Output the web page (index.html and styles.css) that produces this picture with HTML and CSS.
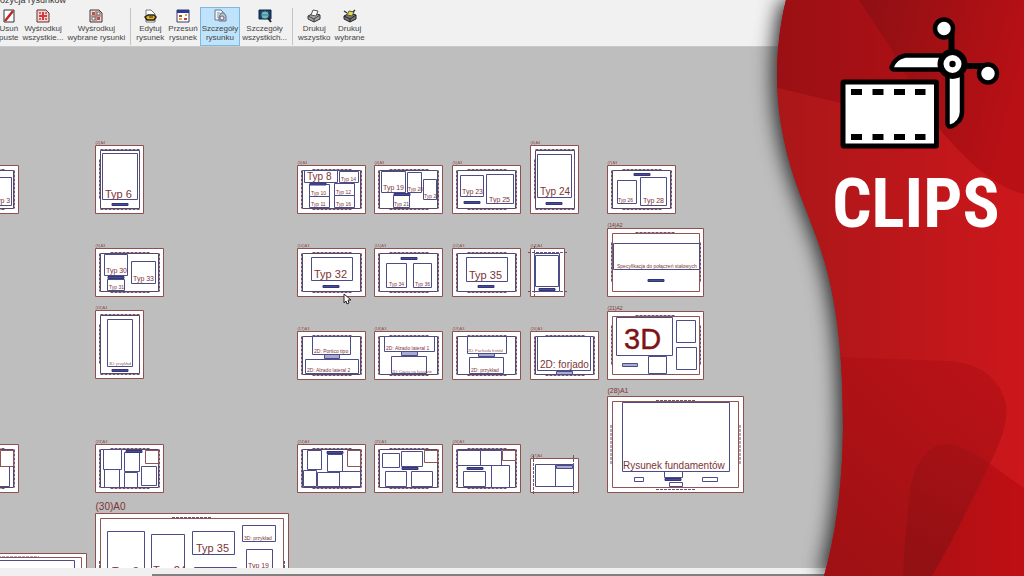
FILE: index.html
```html
<!DOCTYPE html>
<html lang="pl">
<head>
<meta charset="utf-8">
<title>Kompozycja rysunków</title>
<link rel="stylesheet" href="styles.css">
</head>
<body>
<main class="app">
  <header class="titlebar"><span class="title">Kompozycja rysunków</span></header>
  <nav class="toolbar" aria-label="Rysunki">
    <button class="tool tool-first" type="button">
      <svg class="icon" viewBox="0 0 14 14"><path d="M2 1h10v12H2z" fill="#fff" stroke="#333"/><path d="M3 12 11 2" stroke="#c3221f" stroke-width="2.4"/></svg>
      <span>Usuń<br>puste</span></button>
    <button class="tool" type="button">
      <svg class="icon" viewBox="0 0 14 14"><path d="M1 1h9l3 3v9H1z" fill="#f8d4d4" stroke="#5c3030"/><path d="M7 3v8M3 7h8" stroke="#d43a3a" stroke-width="2"/><path d="M3 3h2v2H3zM9 3h2v2H9zM3 9h2v2H3zM9 9h2v2H9z" fill="#c66"/></svg>
      <span>Wyśrodkuj<br>wszystkie...</span></button>
    <button class="tool" type="button">
      <svg class="icon" viewBox="0 0 14 14"><path d="M1 1h9l3 3v9H1z" fill="#ecdada" stroke="#4a3333"/><path d="M3 3h3v3H3zM8 8h3v3H8z" fill="#b85050"/><path d="M8 3h3v3H8zM3 8h3v3H3z" fill="#fff" stroke="#766"/><path d="M7 2v10M2 7h10" stroke="#866"/></svg>
      <span>Wyśrodkuj<br>wybrane rysunki</span></button>
    <span class="separator"></span>
    <button class="tool" type="button">
      <svg class="icon" viewBox="0 0 14 14"><path d="M3 1h5l4 4v8H3z" fill="#fff" stroke="#777"/><path d="M2 8 5 6h6l2 2-2 3H4z" fill="#efb51d" stroke="#222" stroke-width="1.5"/><path d="M6 8h4" stroke="#222"/></svg>
      <span>Edytuj<br>rysunek</span></button>
    <button class="tool" type="button">
      <svg class="icon" viewBox="0 0 14 14"><path d="M1 1h12v12H1z" fill="#fff" stroke="#383868"/><path d="M1 1h12v3H1z" fill="#263b91"/><path d="M3 6h3v2H3zM8 9h3v2H8z" fill="#c93d35"/><path d="M9 6h2M3 10h3" stroke="#e4a52c" stroke-width="2"/></svg>
      <span>Przesuń<br>rysunek</span></button>
    <button class="tool tool-active" type="button" aria-pressed="true">
      <svg class="icon" viewBox="0 0 14 14"><path d="M2 1h6l2 2v8H2z" fill="#f2f5fa" stroke="#687789"/><path d="M4 4h3M4 6h2M4 8h2" stroke="#8491a4"/><path d="M8 4h3l2 3v5H6V8z" fill="#b8c2d0" stroke="#657386"/><circle cx="9" cy="9" r="2" fill="#eef" stroke="#667"/></svg>
      <span>Szczegóły<br>rysunku</span></button>
    <button class="tool" type="button">
      <svg class="icon" viewBox="0 0 14 14"><path d="M1 1h12v9H1z" fill="#183c73" stroke="#172440"/><circle cx="7" cy="6" r="4" fill="#a9dce0" stroke="#14616b"/><path d="M3 6h8M7 2v8M5 3v6M9 3v6" stroke="#216d83" stroke-width=".7"/><path d="m10 9 3 4" stroke="#222" stroke-width="2"/></svg>
      <span>Szczegóły<br>wszystkich...</span></button>
    <span class="separator"></span>
    <button class="tool" type="button">
      <svg class="icon" viewBox="0 0 14 14"><path d="m1 7 6-3 6 2v4l-6 3-6-3z" fill="#a5a5a5" stroke="#333"/><path d="m4 6 2-5 5 1-2 5z" fill="#fff" stroke="#555"/><path d="m1 7 6 3 6-4M7 10v3" fill="none" stroke="#444"/></svg>
      <span>Drukuj<br>wszystko</span></button>
    <button class="tool" type="button">
      <svg class="icon" viewBox="0 0 14 14"><path d="m1 7 6-3 6 2v4l-6 3-6-3z" fill="#777" stroke="#222"/><path d="m4 6 2-4 5 1-2 4z" fill="#e8dc35" stroke="#555"/><path d="m1 7 6 3 6-4M7 10v3" fill="none" stroke="#222"/><path d="m1 2 3 2M12 1l-2 2" stroke="#333" stroke-width="1.5"/></svg>
      <span>Drukuj<br>wybrane</span></button>
  </nav>

  <section class="workspace" aria-label="Arkusze">
    <svg class="sheets">
      <defs>
        <g id="a3">
          <path class="sheet" d="M0 0h68v48H0z"/><path class="frame" d="M5 5h58v38H5z"/>
          <path class="marks" d="M15 4h39M15 44h39M4 5v38M64 5v38"/>
        </g>
        <g id="a4">
          <path class="sheet" d="M0 0h48v68H0z"/><path class="frame" d="M5 5h39v58H5z"/>
          <path class="marks" d="M5 4h39M5 64h39M4 14v40M44 14v40"/>
        </g>
        <g id="a2">
          <path class="sheet" d="M0 0h96v68H0z"/><path class="frame frame-red" d="M5 5h87v58H5z"/>
          <path class="marks" d="M28 4h40M28 63h40M4 14v40M93 14v40"/>
        </g>
        <path id="stamp" class="stamp" d="M0 0h16v2H0z"/>
      </defs>
      <g transform="translate(0 -47)">
        <use href="#a3" x="-49.5" y="165.5"/><use href="#a4" x="95.5" y="145.5"/>
        <use href="#a3" x="297.5" y="165.5"/><use href="#a3" x="374.5" y="165.5"/><use href="#a3" x="452.5" y="165.5"/>
        <use href="#a4" x="530.5" y="145.5"/><use href="#a3" x="607.5" y="165.5"/>
        <use href="#a3" x="95.5" y="248.5"/><use href="#a3" x="297.5" y="248.5"/><use href="#a3" x="374.5" y="248.5"/><use href="#a3" x="452.5" y="248.5"/>
        <use href="#a2" x="607.5" y="228.5"/><use href="#a4" x="95.5" y="310.5"/>
        <use href="#a3" x="297.5" y="331.5"/><use href="#a3" x="374.5" y="331.5"/><use href="#a3" x="452.5" y="331.5"/><use href="#a3" x="530.5" y="331.5"/>
        <use href="#a2" x="607.5" y="311.5"/>
        <use href="#a3" x="-49.5" y="444.5"/><use href="#a3" x="95.5" y="444.5"/><use href="#a3" x="297.5" y="444.5"/><use href="#a3" x="374.5" y="444.5"/><use href="#a3" x="452.5" y="444.5"/>

        <path class="sheet" d="M530.5 248.5h34v48h-34zM530.5 458.5h48v34h-48zM607.5 396.5h136v96h-136zM95.5 513.5h193v70h-193zM-20.5 553.5h107v40h-107z"/>
        <path class="frame frame-red" d="M612.5 401.5h126v86h-126zM100.5 518.5h183v70h-183zM-20.5 557.5h102v40h-102z"/>
        <path class="marks" d="M656 400.5h40M656 489.5h40M611 425v39M740 425v39M172 517.5h40M99.500 561v20M284.500 561v20M-10 557h49M528 252.500h39M528 291.500h39M534.500 246v50M533.500 455v40M573.500 455v40"/>

        <path class="view" d="M-20.500 177.500h32v28h-32zM102.500 153.500h35v46h-35z
          M304.500 170.500h33v12h-33zM339.500 171.500h19v11h-19zM309.500 184.500h20v12h-20zM309.500 196.500h20v11h-20zM334.500 183.500h20v12h-20zM334.500 195.500h20v12h-20z
          M381.500 171.500h24v21h-24zM407.500 172.500h14v20h-14zM423.500 179.500h13v20h-13zM393.500 195.500h16v12h-16z
          M460.500 175.500h23v21h-23zM486.500 174.500h27v29h-27zM537.500 154.500h34v43h-34z
          M617.500 180.500h19v23h-19zM640.500 177.500h26v28h-26z
          M104.500 254.500h23v21h-23zM107.500 279.500h17v11h-17zM131.500 261.500h24v22h-24z
          M311.500 257.500h41v23h-41zM386.500 263.500h20v24h-20zM413.500 263.500h18v24h-18zM466.500 257.500h41v24h-41z
          M534.500 253.500h25v38h-25zM535.500 255.500h23v31h-23zM613.500 243.500h86v26h-86z
          M107.500 319.500h25v47h-25z
          M312.500 336.500h38v18h-38zM305.500 359.500h53v14h-53zM384.500 336.500h50v15h-50zM391.500 356.500h35v17h-35z
          M467.500 336.500h39v17h-39zM469.500 357.500h34v16h-34zM537.500 336.500h53v34h-53z
          M616.500 317.500h56v38h-56zM648.500 356.500h18v17h-18zM676.500 320.500h19v22h-19zM676.500 347.500h20v22h-20z
          M622.500 402.500h107v69h-107zM664.500 471.500h18v6h-18zM634.500 477.500h9v4h-9zM702.500 477.500h15v4h-15zM669.500 482.500h13v4h-13z"/>
        <path class="view" d="M-8.500 466.500h18v20h-18z
          M103.500 449.500h18v20h-18zM104.500 469.500h15v18h-15zM124.500 452.500h15v19h-15zM124.500 472.500h13v15h-13zM141.500 466.500h15v19h-15z
          M307.500 450.500h14v19h-14zM327.500 454.500h15v17h-15zM303.500 470.500h13v16h-13zM317.500 472.500h22v14h-22zM339.500 471.500h21v15h-21z
          M382.500 453.500h17v14h-17zM401.500 451.500h21v15h-21zM385.500 471.500h21v15h-21zM411.500 471.500h21v15h-21z
          M457.500 450.500h23v15h-23zM480.500 450.500h21v15h-21zM463.500 471.500h22v15h-22zM491.500 465.500h18v22h-18z
          M535.500 464.500h20v22h-20zM555.500 464.500h18v22h-18z
          M107.500 531.500h37v50h-37zM151.500 534.500h33v50h-33zM192.500 531.500h42v23h-42zM242.500 525.500h33v16h-33zM246.500 549.500h26v40h-26zM194.500 567.500h42v12h-42zM-20.500 560.500h95v30h-95z"/>
        <path class="frame frame-red" d="M0.500 450.500h13v16h-13zM145.500 450.500h13v13h-13zM347.500 450.500h13v16h-13zM424.500 450.500h13v12h-13zM502.500 450.500h13v10h-13z"/>

        <use href="#stamp" x="112" y="203.500"/><use href="#stamp" x="464" y="201.500"/><use href="#stamp" x="546" y="202.500"/><use href="#stamp" x="634" y="173.500"/>
        <use href="#stamp" x="108" y="276.500"/><use href="#stamp" x="323" y="285.500"/><use href="#stamp" x="401" y="257.500"/><use href="#stamp" x="478" y="285.500"/><use href="#stamp" x="539" y="288.500"/><use href="#stamp" x="648" y="279.500"/>
        <use href="#stamp" x="112" y="369.500"/><use href="#stamp" x="126" y="450.500"/><use href="#stamp" x="394" y="193.500"/><use href="#stamp" x="310" y="183"/><use href="#stamp" x="327" y="451.500"/><use href="#stamp" x="402" y="467.500"/><use href="#stamp" x="467" y="467.500"/><use href="#stamp" x="665" y="478.500"/>
        <path class="view stamp-open" d="M324.500 354.500h15v4h-15zM401.500 351.500h16v4h-16zM478.500 353.500h16v3h-16zM556.500 371.500h16v3h-16zM622.500 363.500h15v3h-15zM556.500 465.500h16v3h-16z"/>

        <g class="caption caption-xs">
          <text x="95.500" y="144">(2)A4</text><text x="297.500" y="164">(3)A3</text><text x="374.500" y="164">(4)A3</text><text x="452.500" y="164">(5)A3</text><text x="530.500" y="144">(6)A4</text><text x="607.500" y="164">(7)A3</text>
          <text x="95.500" y="247">(9)A3</text><text x="297.500" y="247">(10)A3</text><text x="374.500" y="247">(11)A3</text><text x="452.500" y="247">(12)A3</text><text x="530.500" y="247">(13)A4</text>
          <text x="95.500" y="309">(16)A4</text><text x="297.500" y="330">(17)A3</text><text x="374.500" y="330">(18)A3</text><text x="452.500" y="330">(19)A3</text><text x="530.500" y="330">(20)A3</text>
          <text x="95.500" y="443">(23)A3</text><text x="297.500" y="443">(24)A3</text><text x="374.500" y="443">(25)A3</text><text x="452.500" y="443">(26)A3</text><text x="530.500" y="457">(27)A4</text>
          <text x="109" y="365">3D: przykład</text><text x="392" y="373">2D: Cięcia na fasadzie</text><text x="468" y="352">2D: Fachada frontal</text>
        </g>
        <g class="caption caption-s">
          <text x="607.500" y="227">(14)A2</text><text x="607.500" y="310">(21)A2</text>
          <text x="341" y="181">Typ 14</text><text x="311" y="195">Typ 10</text><text x="336" y="194">Typ 12</text><text x="311" y="206">Typ 11</text><text x="336" y="206">Typ 16</text>
          <text x="408" y="191">Typ 20</text><text x="424" y="198">Typ 22</text><text x="394" y="206">Typ 21</text><text x="618" y="202">Typ 26</text>
          <text x="109" y="289">Typ 31</text><text x="389" y="286">Typ 34</text><text x="415" y="286">Typ 36</text>
          <text x="617" y="268">Specyfikacja do połączeń stalowych</text>
          <text x="314" y="353">2D: Portico tipo</text><text x="307" y="372">2D: Alzado lateral 2</text><text x="386" y="350">2D: Alzado lateral 1</text><text x="471" y="372">2D: przykład</text><text x="244" y="540">3D: przykład</text>
        </g>
        <g class="caption caption-m">
          <text x="-7" y="203">Typ 3</text><text x="383" y="190">Typ 19</text><text x="462" y="194">Typ 23</text><text x="489" y="202">Typ 25</text><text x="643" y="203">Typ 28</text>
          <text x="106" y="273">Typ 30</text><text x="133" y="281">Typ 33</text><text x="607.500" y="393">(28)A1</text><text x="248" y="568">Typ 19</text>
        </g>
        <g class="caption caption-l">
          <text x="307" y="180">Typ 8</text><text x="540" y="195">Typ 24</text><text x="540" y="368">2D: forjado</text><text x="95.500" y="510">(30)A0</text><text x="623" y="469">Rysunek fundamentów</text>
        </g>
        <g class="caption caption-xl">
          <text x="105" y="198">Typ 6</text><text x="314" y="278">Typ 32</text><text x="469" y="279">Typ 35</text><text x="196" y="552">Typ 35</text>
          <text x="112" y="575">Typ 3</text><text x="153" y="574">Typ 24</text>
        </g>
        <text class="caption caption-3d" x="624" y="349">3D</text>
        <path class="cursor" d="m344 294 0 9 2-2 1 3 2-1-1-3h3z"/>
      </g>
    </svg>
  </section>
  <footer class="statusbar"><span class="track"></span></footer>

  <aside class="banner">
    <svg class="wave" viewBox="0 0 284 576" preserveAspectRatio="none" aria-hidden="true">
      <defs>
        <linearGradient id="base" x1="40" y1="0" x2="284" y2="0" gradientUnits="userSpaceOnUse"><stop stop-color="#ab1719"/><stop offset="1" stop-color="#cc171c"/></linearGradient>
        <linearGradient id="upper" x1="40" y1="0" x2="284" y2="0" gradientUnits="userSpaceOnUse"><stop stop-color="#9b1014"/><stop offset="1" stop-color="#b91016"/></linearGradient>
        <linearGradient id="top" x1="90" y1="20" x2="284" y2="70" gradientUnits="userSpaceOnUse"><stop stop-color="#890f13"/><stop offset=".5" stop-color="#a01014"/><stop offset="1" stop-color="#b81015"/></linearGradient>
        <linearGradient id="lower" x1="90" y1="550" x2="260" y2="370" gradientUnits="userSpaceOnUse"><stop stop-color="#9f1114"/><stop offset="1" stop-color="#ba1217"/></linearGradient>
        <linearGradient id="corner" x1="180" y1="0" x2="284" y2="0" gradientUnits="userSpaceOnUse"><stop stop-color="#ad1014"/><stop offset="1" stop-color="#bf0f14"/></linearGradient>
        <linearGradient id="overlap" x1="180" y1="560" x2="240" y2="450" gradientUnits="userSpaceOnUse"><stop stop-color="#931013"/><stop offset="1" stop-color="#a71115"/></linearGradient>
        <path id="edge" d="M46 0C35 45 34 95 44 140C52 180 68 212 80 247C98 300 103 360 103 425C103 480 96 535 84 576H284V0Z"/>
        <clipPath id="clip"><use href="#edge"/></clipPath>
        <clipPath id="drop"><path d="M163 576Q165 535 169 500Q172 460 195 446Q215 438 250 464L284 488V576z"/></clipPath>
      </defs>
      <use class="wave-shadow" href="#edge"/>
      <g clip-path="url(#clip)">
        <path d="M0 0h284v576H0z" fill="url(#base)"/>
        <path d="M0 76 38 88 100 103 200 125 210 0H0z" fill="url(#upper)"/>
        <path d="M119 0Q130 17 147 42L192 120Q245 186 284 194V0z" fill="url(#top)"/>
        <path d="M163 576Q165 535 169 500Q172 460 195 446Q215 438 250 464L284 488V576z" fill="url(#corner)"/>
        <path d="M0 355 100 357 210 361C245 363 263 385 266 405C269 430 254 455 232 500Q213 540 192 576H0z" fill="url(#lower)"/>
        <path d="M0 357h205C245 363 263 385 266 405C269 430 254 455 232 500Q213 540 192 576H0z" clip-path="url(#drop)" fill="url(#overlap)"/>
      </g>
    </svg>
    <svg class="clip-icon" viewBox="840 16 160 136" role="img" aria-label="Film i nożyczki">
      <rect x="843" y="82" width="93.500" height="64" rx="1" fill="#fff" stroke="#000" stroke-width="5"/>
      <path d="M851 89h11v6h-11zM872.500 89h11v6h-11zM894 89h11v6h-11zM915 89h10.500v6H915zM851 134h11v6h-11zM872.500 134h11v6h-11zM894 134h11v6h-11zM915 134h10.500v6H915z"/>
      <path d="M951.500 30v34M953 66h35" stroke="#000" stroke-width="6"/>
      <g fill="#fff" stroke="#000" stroke-width="4.500" stroke-linejoin="round">
        <path d="M942 55.500H905C898 57 893 62 891.500 67.500Q892 69.500 894 69.500H942z"/>
        <path d="M947.500 75V124Q948 127 951 126.500C957 124.500 962 119 962 112V75z"/>
        <circle cx="944" cy="28.500" r="9"/><circle cx="988" cy="73.500" r="9"/>
        <circle cx="952.500" cy="64" r="12" stroke-width="6"/>
      </g>
      <circle cx="952.500" cy="64" r="3.200"/>
    </svg>
    <h1 class="banner-title">CLIPS</h1>
  </aside>
</main>
</body>
</html>
```
FILE: styles.css
```css
* { box-sizing: border-box; }

body {
  margin: 0;
  font-family: "Liberation Sans", Arial, sans-serif;
}

.app {
  position: relative;
  display: flex;
  flex-direction: column;
  height: 100vh;
  overflow: hidden;
  background: #f1f1f1;
}

.titlebar {
  display: flex;
  justify-content: flex-end;
  align-items: flex-end;
  width: 66px;
  height: 7px;
  color: #333;
  font-size: 9px;
  line-height: 12px;
  white-space: nowrap;
  padding-bottom: 1px;
}

.toolbar {
  display: flex;
  height: 40px;
  border-bottom: 1px solid #c9c9c9;
}

.tool {
  display: flex;
  flex: none;
  flex-direction: column;
  align-items: center;
  gap: 1px;
  padding: 1px 1px 0;
  border: 1px solid transparent;
  background: none;
  color: #444;
  font-family: "Liberation Sans", Arial, sans-serif;
  font-size: 8px;
  line-height: 9px;
  text-align: center;
  white-space: nowrap;
}

.tool-first { margin-left: -3px; }

.tool-active {
  border-color: #7fb8dc;
  background: #bfe3fa;
}

.icon {
  width: 14px;
  height: 14px;
}

.separator {
  width: 1px;
  margin: 1px 3px;
  background: #c4c4c4;
}

.workspace {
  flex: 1;
  min-height: 0;
  background: #bebebe;
}

.sheets {
  display: block;
  width: 100%;
  height: 100%;
}

.sheet { fill: #fff; stroke: #8f5050; }
.frame { fill: none; stroke: #554766; }
.frame-red { stroke: #8f5555; }
.marks { fill: none; stroke: #6d5470; stroke-dasharray: 3 1; }
.view { fill: #fff; stroke: #4c4c88; }
.stamp { fill: #4c4c94; stroke: #34347a; }
.stamp-open { fill: #aaaad4; }
.caption { fill: #7c3434; }
.caption-xs { font-size: 4px; opacity: 0.8; }
.caption-s { font-size: 5px; }
.caption-m { font-size: 7px; }
.caption-l { font-size: 10px; }
.caption-xl { font-size: 11px; }
.caption-3d { font-size: 29px; fill: #7d1414; stroke: #7d1414; stroke-width: 0.4; }
.cursor { fill: #fff; stroke: #222; }

.statusbar {
  display: flex;
  align-items: flex-end;
  height: 8px;
  padding-left: 152px;
  background: #f0f0f0;
}

.track {
  flex: 1;
  height: 2px;
  background: #808080;
}

.banner {
  position: absolute;
  top: 0;
  right: 0;
  bottom: 0;
  display: flex;
  flex-direction: column;
  align-items: center;
  width: 284px;
  padding: 16px 24px 0 92px;
}

.wave {
  position: absolute;
  inset: 0;
  width: 100%;
  height: 100%;
  overflow: visible;
}

.wave-shadow {
  fill: #a51518;
  filter: drop-shadow(-4px 0 10px #222);
}

.clip-icon {
  position: relative;
  align-self: flex-end;
  width: 160px;
  height: 136px;
}

.banner-title {
  position: relative;
  margin: 12px 0 0;
  color: #fff;
  font-family: "Roboto Condensed", "Liberation Sans Narrow", Roboto, sans-serif;
  font-size: 69px;
  font-weight: 700;
  line-height: 80px;
}
```
